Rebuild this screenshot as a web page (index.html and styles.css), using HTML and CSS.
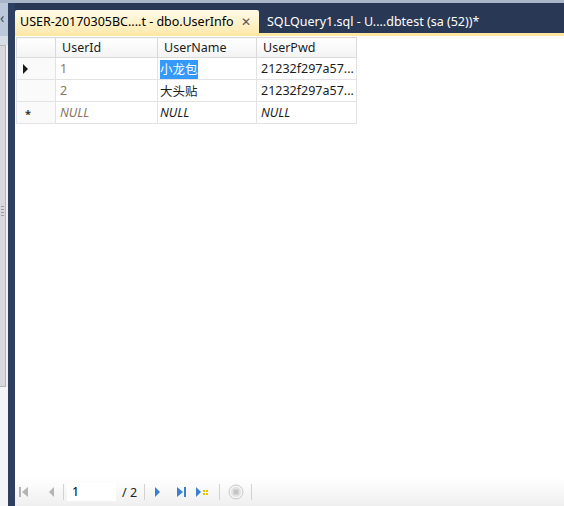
FILE: index.html
```html
<!DOCTYPE html>
<html>
<head>
<meta charset="utf-8">
<link rel="stylesheet" href="styles.css">
</head>
<body>
<div class="topline"></div>
<div class="main">
  <div class="side">
    <div class="side-top"><span class="side-arrow">&lsaquo;</span></div>
    <div class="side-band"></div>
    <div class="side-scroll"><div class="side-grip"></div></div>
    <div class="side-rest"></div>
  </div>
  <div class="divider"></div>
  <div class="doc">
    <div class="tabbar">
      <div class="tab active"><span class="tab-title">USER-20170305BC....t - dbo.UserInfo</span><span class="tab-close">✕</span></div>
      <div class="tab"><span class="tab-title">SQLQuery1.sql - U....dbtest (sa (52))*</span></div>
    </div>
    <div class="tabline"></div>
    <div class="content">
      <table class="grid">
        <tr class="head">
          <th class="rh"></th>
          <th class="c1">UserId</th>
          <th class="c2">UserName</th>
          <th class="c3">UserPwd</th>
        </tr>
        <tr>
          <td class="rh"><span class="cur"></span></td>
          <td class="ro">1</td>
          <td class="name"><span class="sel">小龙包</span></td>
          <td>21232f297a57...</td>
        </tr>
        <tr>
          <td class="rh"></td>
          <td class="ro">2</td>
          <td class="name">大头贴</td>
          <td>21232f297a57...</td>
        </tr>
        <tr>
          <td class="rh"><span class="star">*</span></td>
          <td class="ro null">NULL</td>
          <td class="name null">NULL</td>
          <td class="null">NULL</td>
        </tr>
      </table>
    </div>
    <div class="toolbar">
      <svg class="ic" width="14" height="14" viewBox="0 0 14 14"><rect x="2" y="2" width="2" height="10" fill="#b4b4b4"/><path d="M11 2 L5 7 L11 12 Z" fill="#b4b4b4"/></svg>
      <svg class="ic ic-prev" width="10" height="14" viewBox="0 0 10 14"><path d="M8 2 L3 7 L8 12 Z" fill="#b4b4b4"/></svg>
      <span class="sep"></span>
      <span class="pagebox">1</span>
      <span class="pages">/ 2</span>
      <span class="sep"></span>
      <svg class="ic ic-next" width="10" height="14" viewBox="0 0 10 14"><path d="M3 2 L8 7 L3 12 Z" fill="#3a7fd0"/></svg>
      <svg class="ic ic-last" width="14" height="14" viewBox="0 0 14 14"><path d="M3 2 L9 7 L3 12 Z" fill="#3a7fd0"/><rect x="10" y="2" width="2" height="10" fill="#3a7fd0"/></svg>
      <svg class="ic ic-new" width="18" height="14" viewBox="0 0 18 14"><path d="M2 2 L7 7 L2 12 Z" fill="#3a7fd0"/><path d="M9 5 h2 v2 h-2z M12 5 h2 v2 h-2z M9 8 h2 v2 h-2z M12 8 h2 v2 h-2z" fill="#e8c400"/></svg>
      <span class="sep"></span>
      <svg class="ic ic-stop" width="16" height="16" viewBox="0 0 16 16"><circle cx="8" cy="8" r="7" fill="#f4f4f4" stroke="#c8c8c8"/><circle cx="8" cy="8" r="5" fill="#e2e2e2"/><rect x="5.5" y="5.5" width="5" height="5" fill="#c4c4c4"/></svg>
      <span class="sep"></span>
    </div>
  </div>
</div>
</body>
</html>
```

FILE: styles.css
```css
html, body {
  margin: 0;
  padding: 0;
}
body {
  width: 564px;
  height: 506px;
  overflow: hidden;
  font-family: "Noto Sans", "Noto Sans CJK SC", sans-serif;
  font-size: 12px;
  background: #ffffff;
  display: flex;
  flex-direction: column;
}
.topline {
  height: 3px;
  background: #a9b6c9;
  flex: none;
}
.main {
  flex: 1;
  display: flex;
  min-height: 0;
}
.side {
  width: 8px;
  display: flex;
  flex-direction: column;
  background: #eef0f4;
}
.side-top {
  height: 33px;
  background: #bcc8d9;
  position: relative;
}
.side-arrow {
  position: absolute;
  left: 0;
  top: 8px;
  font-size: 14px;
  line-height: 14px;
  color: #3d4d66;
}
.side-band {
  height: 9px;
  background: #d7dde7;
}
.side-scroll {
  height: 340px;
  margin-right: 2px;
  background: #d9d9dd;
  border: 1px solid #b4b6bc;
  border-left: none;
  position: relative;
}
.side-grip {
  position: absolute;
  left: 1px;
  top: 160px;
  width: 3px;
  height: 12px;
  background: repeating-linear-gradient(#9a9ca2 0 1px, transparent 1px 3px);
}
.side-rest {
  flex: 1;
  background: #f4f5f7;
}
.divider {
  width: 7px;
  background: #2f3f5f;
}
.doc {
  flex: 1;
  display: flex;
  flex-direction: column;
  min-width: 0;
  background: #ffffff;
}
.tabbar {
  height: 30px;
  background: #293955;
  display: flex;
  align-items: flex-end;
}
.tab {
  height: 23px;
  display: flex;
  align-items: center;
  padding: 0 6px 0 5px;
  color: #ffffff;
  white-space: nowrap;
  font-size: 12.5px;
}
.tab.active {
  width: 233px;
  background: linear-gradient(#fffbe8, #ffeab0);
  color: #000000;
  justify-content: space-between;
  border-radius: 2px 2px 0 0;
}
.tab-close {
  font-size: 12px;
  color: #555555;
  margin-right: 2px;
}
.tab + .tab {
  padding-left: 8px;
}
.tabline {
  height: 3px;
  background: #ffe8a6;
}
.content {
  flex: 1;
  padding: 1px 0 0 1px;
}
.grid {
  border-collapse: collapse;
  table-layout: fixed;
  font-size: 12.5px;
}
.grid th, .grid td {
  height: 21px;
  padding: 0 0 0 4px;
  border: 1px solid #e3e3e3;
  white-space: nowrap;
  text-align: left;
  vertical-align: middle;
  color: #1c1c1c;
}
.grid th {
  height: 19px;
  font-weight: normal;
  background: linear-gradient(#ffffff, #f3f3f3);
  border-color: #dadada;
  padding-left: 6px;
}
.grid .rh {
  width: 38px;
  background: #fafafa;
  padding: 0;
  position: relative;
}
.grid th.rh {
  background: linear-gradient(#ffffff, #f3f3f3);
}
.grid .c1 { width: 95px; }
.grid .c2 { width: 92px; }
.grid .c3 { width: 93px; }
.grid td.ro {
  color: #8a7560;
}
.grid td.name {
  padding-left: 2px;
}
.grid .null {
  font-style: italic;
}
.sel {
  background: #3399ff;
  color: #ffffff;
  padding: 1px 0;
}
.cur {
  position: absolute;
  left: 6px;
  top: 6px;
  width: 0;
  height: 0;
  border-top: 5px solid transparent;
  border-bottom: 5px solid transparent;
  border-left: 5px solid #1a1a1a;
}
.star {
  position: absolute;
  left: 8px;
  top: 6px;
  font-size: 11px;
  line-height: 11px;
  color: #333333;
  font-weight: bold;
}
.toolbar {
  height: 28px;
  background: linear-gradient(#ffffff, #efefef);
  display: flex;
  align-items: center;
  padding-left: 2px;
  gap: 0;
}
.ic {
  display: block;
  flex: none;
}
.ic-prev { margin-left: 15px; }
.sep {
  width: 1px;
  height: 16px;
  background: #d2d2d2;
  margin: 0 3px 0 7px;
}
.pagebox {
  width: 44px;
  height: 18px;
  background: #ffffff;
  padding-left: 5px;
  line-height: 18px;
  font-size: 12.5px;
}
.pages {
  margin-left: 6px;
  font-size: 12.5px;
  color: #222222;
}
.ic-next { margin-left: 4px; }
.ic-last { margin-left: 12px; }
.ic-new { margin-left: 6px; }
.ic-stop { margin-left: 5px; }
```
